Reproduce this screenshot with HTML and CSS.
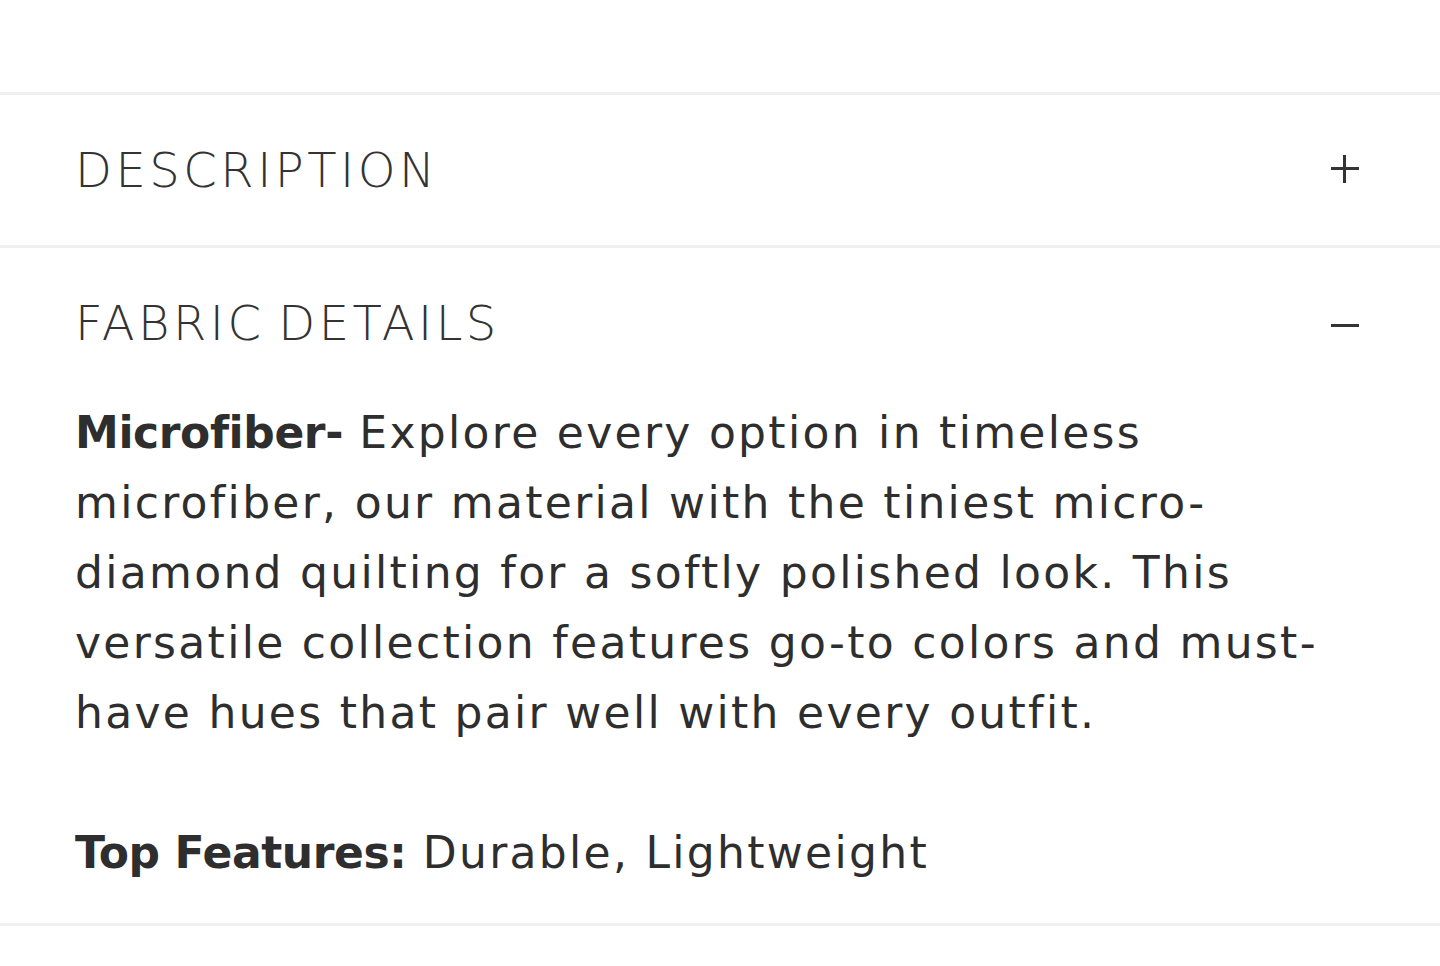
FILE: index.html
```html
<!DOCTYPE html>
<html>
<head>
<meta charset="utf-8">
<link rel="stylesheet" href="styles.css">
</head>
<body>
<div class="page">
  <section class="acc">
    <div class="acc-head">
      <span class="acc-title">DESCRIPTION</span>
      <span class="icon plus"></span>
    </div>
  </section>
  <section class="acc">
    <div class="acc-head">
      <span class="acc-title">FABRIC DETAILS</span>
      <span class="icon minus"></span>
    </div>
    <div class="acc-body">
      <p class="para"><strong>Microfiber-</strong> Explore every option in timeless<br>microfiber, our material with the tiniest micro-<br>diamond quilting for a softly polished look. This<br>versatile collection features go-to colors and must-<br>have hues that pair well with every outfit.</p>
      <p class="para"><strong>Top Features:</strong> Durable, Lightweight</p>
    </div>
  </section>
</div>
</body>
</html>
```
FILE: styles.css
```css
html, body {
  margin: 0;
  padding: 0;
  background: #ffffff;
}
.page {
  padding-top: 92px;
  font-family: "DejaVu Sans", sans-serif;
  color: #333333;
}
.acc {
  border-top: 3px solid #f0f0f0;
}
.acc:last-child {
  border-bottom: 3px solid #f0f0f0;
}
.acc-head {
  height: 150px;
  display: flex;
  align-items: center;
  justify-content: space-between;
  padding: 0 81px 0 75px;
}
.acc-title {
  font-size: 48px;
  font-weight: 300;
  letter-spacing: 3.5px;
  word-spacing: -5px;
  color: #333;
}
.icon {
  position: relative;
  width: 28px;
  height: 28px;
}
.plus {
  margin-top: -3px;
}
.minus {
  margin-top: 5px;
}
.icon::before, .plus::after {
  content: "";
  position: absolute;
  background: #333;
}
.icon::before {
  left: 0;
  right: 0;
  top: 12px;
  height: 3px;
}
.plus::after {
  top: 0;
  bottom: 0;
  left: 12px;
  width: 3px;
}
.acc-body {
  padding: 0 80px 35px 75px;
}
.para {
  margin: 0 0 70px 0;
  font-size: 44px;
  line-height: 70px;
  letter-spacing: 2.3px;
  white-space: nowrap;
  color: #2e2e2e;
}
.para:last-child {
  margin-bottom: 0;
}
.para strong {
  font-weight: 700;
  letter-spacing: -0.4px;
}
```
